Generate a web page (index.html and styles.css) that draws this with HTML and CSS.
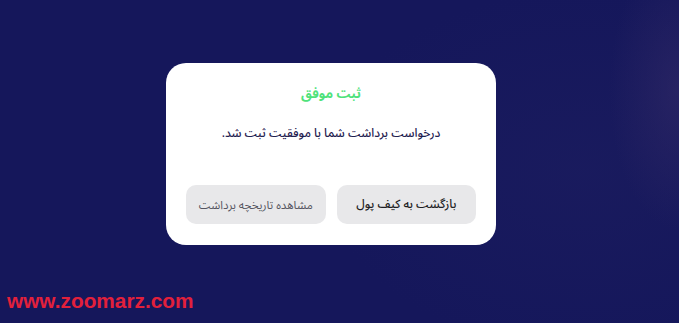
FILE: index.html
```html
<!DOCTYPE html>
<html lang="fa" dir="rtl">
<head>
<meta charset="utf-8">
<link rel="stylesheet" href="styles.css">
</head>
<body>
<div class="stage">
  <div class="card">
    <h2 class="title">ثبت موفق</h2>
    <p class="msg">درخواست برداشت شما با موفقیت ثبت شد.</p>
    <div class="actions">
      <button class="btn btn-primary">بازگشت به کیف پول</button>
      <button class="btn btn-secondary">مشاهده تاریخچه برداشت</button>
    </div>
  </div>
</div>
<div class="watermark" dir="ltr">www.zoomarz.com</div>
</body>
</html>
```

FILE: styles.css
```css
html, body {
  margin: 0;
  padding: 0;
}
body {
  width: 679px;
  height: 323px;
  overflow: hidden;
  position: relative;
  background:
    radial-gradient(ellipse 70px 140px at 679px 90px, rgba(55, 45, 105, 0.5), rgba(55, 45, 105, 0) 100%),
    radial-gradient(ellipse 260px 180px at 580px 170px, rgba(35, 35, 100, 0.3), rgba(35, 35, 100, 0) 100%),
    #15175b;
  font-family: "Noto Sans Arabic", "Vazirmatn", "DejaVu Sans", sans-serif;
}
.stage {
  direction: ltr;
  padding: 63px 0 0 166px;
}
.card {
  direction: rtl;
  width: 330px;
  height: 182px;
  box-sizing: border-box;
  background: #ffffff;
  border-radius: 20px;
  padding: 20px 20px 21px;
  display: flex;
  flex-direction: column;
  align-items: center;
}
.title {
  margin: 0;
  height: 22px;
  line-height: 22px;
  font-size: 13px;
  font-weight: 700;
  color: #4fe27b;
}
.msg {
  margin: 18px 0 0;
  height: 22px;
  line-height: 22px;
  font-size: 12px;
  font-weight: 500;
  color: #1f2150;
}
.actions {
  margin-top: auto;
  width: 100%;
  display: flex;
  gap: 11px;
}
.btn {
  flex: 1;
  height: 39px;
  border: none;
  border-radius: 10px;
  background: #e8e8ea;
  font-family: inherit;
  font-size: 11.5px;
  cursor: pointer;
}
.btn-primary {
  color: #1e1e24;
  font-weight: 500;
  font-size: 12px;
}
.btn-secondary {
  color: #555560;
  font-weight: 400;
}
.watermark {
  position: absolute;
  left: 7px;
  top: 289px;
  font-family: "Liberation Sans", Arial, sans-serif;
  font-weight: 700;
  font-size: 20.8px;
  line-height: 24px;
  color: #e2203b;
}
```
